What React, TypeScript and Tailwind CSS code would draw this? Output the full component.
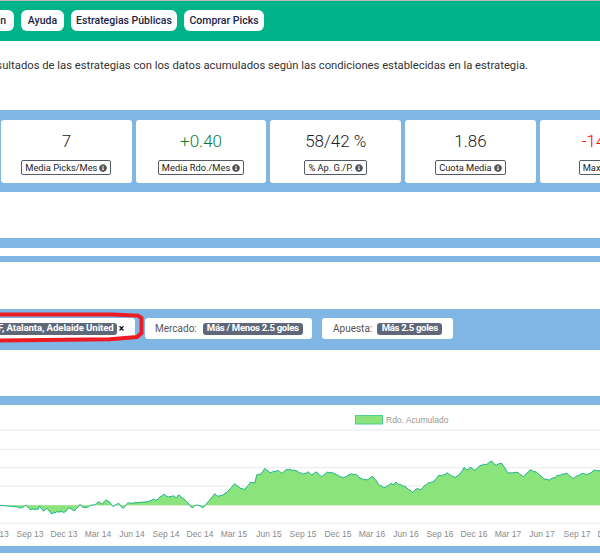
import { FaInfoCircle } from "react-icons/fa";

const left = [[0,331],[55,336],[60,340],[80,331],[90,343],[115,343],[118,333],[130,348],[140,340],[155,357],[170,350],[195,351],[205,339],[225,347],[240,328],[248,337],[262,337],[275,330],[283,330],[295,320],[308,328],[318,314],[330,322],[340,335],[355,325],[370,340],[385,322],[388,325],[445,320],[460,312],[470,315],[490,298],[505,306],[520,302],[530,308],[535,300],[550,310],[565,325],[577,339],[590,330],[600,333]];
const middle = [[8,338],[15,332],[25,320],[44,296],[55,304],[70,300],[85,287],[105,266],[120,280],[135,283],[152,261],[165,263],[170,240],[182,238],[195,220],[210,234],[232,226],[245,235],[260,223],[285,226],[310,238],[325,230],[335,240],[347,231],[365,245],[382,231],[395,232],[410,240],[430,248],[455,236],[470,240],[480,250],[500,255],[518,244],[540,272],[555,278],[572,265],[580,270],[585,263],[600,268]];
const right = [[20,278],[38,293],[50,281],[60,285],[85,263],[100,262],[115,242],[135,240],[140,233],[165,248],[178,240],[192,218],[205,224],[210,217],[225,226],[240,211],[262,207],[275,198],[285,210],[305,205],[325,235],[345,232],[355,233],[370,246],[390,225],[410,232],[430,250],[447,256],[470,243],[500,234],[518,250],[545,236],[565,238],[585,225],[600,228]];

// zoom coordinates to chart coordinates (chart starts at y=405)
const toPoint = (offset: number) => (p: number[]) => [offset + p[0] / 3, p[1] / 3 - 10];
const rough = [...left.map(toPoint(0)), ...middle.map(toPoint(200)), ...right.map(toPoint(400))];

// the real series is daily, so add small steps between the traced points
const points: number[][] = [];
rough.forEach((p, i) => {
  points.push(p);
  const next = rough[i + 1];
  if (!next || next[0] - p[0] < 3 || p[0] < 130 && next[0] - p[0] > 15) return;
  const steps = Math.floor((next[0] - p[0]) / 1.6);
  for (let s = 1; s < steps; s++) {
    const t = s / steps;
    const wobble = Math.sin(s * 2.4 + i * 1.7) * 0.5;
    points.push([p[0] + (next[0] - p[0]) * t, p[1] + (next[1] - p[1]) * t + wobble]);
  }
});
const line = points.map((p) => `${p[0].toFixed(1)},${p[1].toFixed(1)}`).join(" ");
const baseline = 100.3;

const gridLines = [25, 44.3, 62.7, 81, 100.3, 118.3];
const months = [
  ["Jun 13", -4], ["Sep 13", 30], ["Dec 13", 64], ["Mar 14", 98], ["Jun 14", 132], ["Sep 14", 166],
  ["Dec 14", 200], ["Mar 15", 234], ["Jun 15", 269], ["Sep 15", 303], ["Dec 15", 338], ["Mar 16", 372],
  ["Jun 16", 406], ["Sep 16", 440], ["Dec 16", 474], ["Mar 17", 508], ["Jun 17", 542], ["Sep 17", 577], ["Dec 17", 611],
] as const;

const stats = [
  { value: "7", label: "Media Picks/Mes", color: "text-[#222]" },
  { value: "+0.40", label: "Media Rdo./Mes", color: "text-[#0b7a38]" },
  { value: "58/42 %", label: "% Ap. G./P.", color: "text-[#222]" },
  { value: "1.86", label: "Cuota Media", color: "text-[#222]" },
  { value: "-14.20", label: "Max. DD", color: "text-[#ff0000]" },
];

function NavButton({ children, className = "" }: { children: string; className?: string }) {
  return (
    <span className={`flex h-[21px] items-center justify-center whitespace-nowrap rounded-[6px] bg-white text-[10.5px] font-medium text-[#1b2444] ${className}`}>
      {children}
    </span>
  );
}

function Tag({ children, className = "" }: { children: string; className?: string }) {
  return (
    <span className={`flex h-[12px] items-center justify-center whitespace-nowrap rounded-[3px] bg-[#5f6878] text-[9.6px] font-bold text-white ${className}`}>
      {children}
    </span>
  );
}

export default function App() {
  return (
    <div className="h-[560px] w-[600px] overflow-hidden bg-white font-['Roboto',sans-serif]">
      <header className="flex h-[41px] gap-[7px] border-t border-[#b8b8b8] bg-[#00b388] pt-[9px]">
        <NavButton className="ml-[-30px] w-[44px] justify-end pr-[8px]">Plan</NavButton>
        <NavButton className="w-[43px]">Ayuda</NavButton>
        <NavButton className="w-[106px]">Estrategias Públicas</NavButton>
        <NavButton className="w-[80px]">Comprar Picks</NavButton>
      </header>

      <div className="flex h-[69px] justify-end pr-[72px] pt-[17px]">
        <p className="whitespace-nowrap text-[11.25px] leading-[16px] text-[#333]">
          Resultados de las estrategias con los datos acumulados según las condiciones establecidas en la estrategia.
        </p>
      </div>

      <section className="flex h-[82px] gap-[4px] bg-[#7fb6e4] pl-[1px] pt-[10px]">
        {stats.map((stat) => (
          <div key={stat.label} className="flex h-[63px] w-[130.7px] shrink-0 flex-col items-center rounded-[3px] bg-white pt-[11px]">
            <span className={`text-[17px] font-light leading-[20px] ${stat.color}`}>{stat.value}</span>
            <span className="mt-[9px] flex h-[15px] items-center gap-[2px] whitespace-nowrap rounded-[2px] border border-[#555b66] px-[3px] text-[9.3px] text-[#222]">
              {stat.label}
              <FaInfoCircle className="h-[8px] w-[8px] text-[#555]" />
            </span>
          </div>
        ))}
      </section>

      <div className="mt-[46px] h-[10px] bg-[#7fb6e4]" />
      <div className="mt-[8px] h-[6px] bg-[#7fb6e4]" />

      <section className="relative mt-[47px] flex h-[41px] gap-[10px] bg-[#7fb6e4] pt-[9px]">
        <div className="flex h-[21px] w-[135px] items-center justify-end overflow-hidden rounded-r-[3px] bg-white pr-[11px]">
          <Tag className="shrink-0 px-[3px] tracking-[-0.08px]">Elche CF, Atalanta, Adelaide United</Tag>
          <span className="ml-[2px] text-[10px] font-bold leading-none text-black">×</span>
        </div>
        <div className="flex h-[21px] w-[167px] items-center gap-[6px] rounded-[3px] bg-white pl-[10px] text-[10px] text-[#555]">
          Mercado:
          <Tag className="w-[100px] tracking-[-0.3px]">Más / Menos 2.5 goles</Tag>
        </div>
        <div className="flex h-[21px] w-[131px] items-center gap-[5px] rounded-[3px] bg-white pl-[11px] text-[10px] text-[#555]">
          Apuesta:
          <Tag className="w-[65px] tracking-[-0.35px]">Más 2.5 goles</Tag>
        </div>
        <svg className="pointer-events-none absolute left-0 top-0 h-[41px] w-[150px]" viewBox="0 0 150 41" fill="none">
          <path d="M-3 5.5 H112 L138 6.6 L141.5 9 V24 L137 28 L110 30.3 L-3 31.5" stroke="#ed1c24" strokeWidth="4" />
        </svg>
      </section>

      <section className="mt-[46px] h-[157px] bg-[#7fb6e4] pt-[9px]">
        <div className="h-[141px] bg-white">
          <svg className="block h-[141px] w-[600px]" viewBox="0 0 600 141">
            {gridLines.map((y) => (
              <line key={y} x1="0" x2="600" y1={y} y2={y} stroke="#e9e9e9" strokeWidth="1" />
            ))}
            <polygon points={`0,${baseline} ${line} 600,${baseline}`} fill="#8ae37b" />
            <polyline points={line} fill="none" stroke="#1ab38c" strokeWidth="1" />
            <rect x="355.5" y="10.5" width="27" height="8.5" fill="#8ae37b" stroke="#4fcf8f" />
            <text x="386" y="17.5" fontSize="8.5" fill="#999" fontFamily="Liberation Sans, sans-serif">Rdo. Acumulado</text>
            {months.map(([label, x]) => (
              <text key={label} x={x} y="132" fontSize="8.5" fill="#8a8a8a" textAnchor="middle" fontFamily="Liberation Sans, sans-serif">
                {label}
              </text>
            ))}
          </svg>
        </div>
      </section>
    </div>
  );
}
